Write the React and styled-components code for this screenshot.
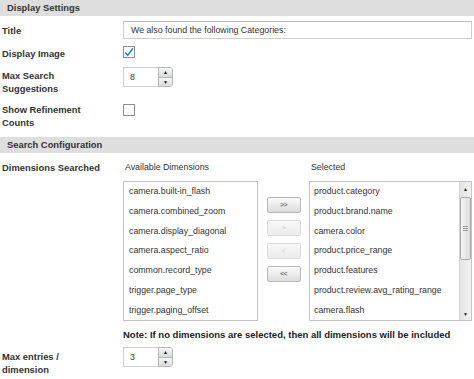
import styled, { createGlobalStyle } from 'styled-components';

const GlobalStyle = createGlobalStyle`
    html, body {
        margin: 0;
        padding: 0;
        background: #ffffff;
    }
    body {
        font-family: "Liberation Sans", Arial, sans-serif;
        color: #333333;
        width: 474px;
        height: 379px;
        overflow: hidden;
    }
`;

const Page = styled.div`
    width: 474px;
    display: flex;
    flex-direction: column;
`;

const SectionHeader = styled.div`
    height: 16px;
    line-height: 16px;
    padding-left: 7px;
    background: #dedede;
    font-size: 9.4px;
    font-weight: 700;
    color: #333;
    margin-top: ${(p) => p.$mt || 0}px;
`;

const Row = styled.div`
    display: grid;
    grid-template-columns: 121px 1fr;
    align-items: start;
    padding-left: 2px;
    height: ${(p) => (p.$h ? `${p.$h}px` : 'auto')};
`;

const Label = styled.div`
    font-size: 9.4px;
    font-weight: 700;
    line-height: 13px;
    color: #333;
    margin-top: ${(p) => p.$mt || 0}px;
`;

const Cell = styled.div`
    margin-top: ${(p) => p.$mt || 0}px;
    display: flex;
    flex-direction: column;
`;

const TextInput = styled.div`
    box-sizing: border-box;
    width: 349px;
    height: 18px;
    border: 1px solid #cfcfcf;
    border-top-color: #b9b9b9;
    padding-left: 7px;
    font-size: 8.8px;
    line-height: 16px;
    color: #333;
`;

const Checkbox = styled.div`
    box-sizing: border-box;
    width: 12px;
    height: 12px;
    border: 1px solid #8f8f8f;
    background: #fff;
    display: flex;
    align-items: center;
    justify-content: center;
`;

const Spinner = styled.div`
    display: flex;
    width: 50px;
    height: 20px;
`;

const SpinValue = styled.div`
    box-sizing: border-box;
    width: 35px;
    height: 100%;
    border: 1px solid #cfcfcf;
    border-right: none;
    padding-left: 6px;
    font-size: 8.8px;
    line-height: 18px;
    color: #333;
`;

const SpinButtons = styled.div`
    box-sizing: border-box;
    width: 15px;
    height: 100%;
    border: 1px solid #b5b5b5;
    border-radius: 0 3px 3px 0;
    display: flex;
    flex-direction: column;
    overflow: hidden;
`;

const SpinHalf = styled.div`
    flex: 1;
    background: linear-gradient(#f7f7f7, #dadada);
    display: flex;
    align-items: center;
    justify-content: center;
    font-size: 5px;
    color: #111;
    border-top: ${(p) => (p.$bottom ? '1px solid #b5b5b5' : 'none')};
`;

const Caption = styled.div`
    font-size: 8.8px;
    line-height: 13px;
    color: #333;
    padding-left: 2px;
    height: 20px;
`;

const Lists = styled.div`
    display: flex;
`;

const ListColumn = styled.div`
    display: flex;
    flex-direction: column;
`;

const ListBox = styled.div`
    box-sizing: border-box;
    width: ${(p) => p.$w}px;
    height: 140px;
    border: 1px solid #c4c4c4;
    display: flex;
    overflow: hidden;
    background: #fff;
`;

const Items = styled.div`
    flex: 1;
    overflow: hidden;
    padding-left: ${(p) => p.$pl}px;
`;

const Item = styled.div`
    height: 19.8px;
    line-height: 19.8px;
    font-size: 8.8px;
    color: #333;
    white-space: nowrap;
`;

const MoveButtons = styled.div`
    width: 51px;
    display: flex;
    flex-direction: column;
    align-items: center;
    gap: 7px;
    padding-top: 36px;
`;

const MoveButton = styled.div`
    box-sizing: border-box;
    width: 34px;
    height: 16px;
    border: 1px solid ${(p) => (p.$disabled ? '#dcdcdc' : '#b8b8b8')};
    border-radius: 2px;
    background: ${(p) =>
        p.$disabled
            ? 'linear-gradient(#f8f8f8, #ececec)'
            : 'linear-gradient(#fafafa, #dcdcdc)'};
    color: ${(p) => (p.$disabled ? '#c8c8c8' : '#444')};
    font-size: 7px;
    line-height: 14px;
    text-align: center;
    letter-spacing: -0.5px;
`;

const ScrollBar = styled.div`
    width: 11px;
    display: flex;
    flex-direction: column;
    background: linear-gradient(90deg, #e4e4e4, #f2f2f2);
    border-left: 1px solid #d4d4d4;
`;

const ScrollArrow = styled.div`
    height: 13px;
    font-size: 5px;
    color: #222;
    display: flex;
    align-items: center;
    justify-content: center;
`;

const ScrollTrack = styled.div`
    flex: 1;
    display: flex;
    flex-direction: column;
`;

const Thumb = styled.div`
    box-sizing: border-box;
    height: 63px;
    margin: 2px 0 0 0;
    border: 1px solid #a9a9a9;
    border-radius: 2px;
    background: linear-gradient(90deg, #f4f4f4, #dcdcdc);
    display: flex;
    align-items: center;
    justify-content: center;
`;

const Grip = styled.div`
    width: 5px;
    height: 6px;
    background: repeating-linear-gradient(#999 0 1px, transparent 1px 2px);
`;

const Note = styled.div`
    font-size: 9.5px;
    font-weight: 700;
    color: #222;
    line-height: 13px;
    margin-top: 7px;
    white-space: nowrap;
`;

function SpinBox({ value }) {
    return (
        <Spinner>
            <SpinValue>{value}</SpinValue>
            <SpinButtons>
                <SpinHalf>▲</SpinHalf>
                <SpinHalf $bottom>▼</SpinHalf>
            </SpinButtons>
        </Spinner>
    );
}

const available = [
    'camera.built-in_flash',
    'camera.combined_zoom',
    'camera.display_diagonal',
    'camera.aspect_ratio',
    'common.record_type',
    'trigger.page_type',
    'trigger.paging_offset',
];

const selected = [
    'product.category',
    'product.brand.name',
    'camera.color',
    'product.price_range',
    'product.features',
    'product.review.avg_rating_range',
    'camera.flash',
];

export default function App() {
    return (
        <Page>
            <GlobalStyle />
            <SectionHeader>Display Settings</SectionHeader>

            <Row $h={28}>
                <Label $mt={8}>Title</Label>
                <Cell $mt={5}>
                    <TextInput>We also found the following Categories:</TextInput>
                </Cell>
            </Row>

            <Row $h={18}>
                <Label $mt={3}>Display Image</Label>
                <Cell $mt={2}>
                    <Checkbox>
                        <svg width="11" height="11" viewBox="0 0 11 11">
                            <path
                                d="M1.5 5.5 L4.2 8.6 L9.8 0.8"
                                fill="none"
                                stroke="#1e88d8"
                                strokeWidth="1.7"
                            />
                        </svg>
                    </Checkbox>
                </Cell>
            </Row>

            <Row $h={35}>
                <Label $mt={7}>
                    Max Search
                    <br />
                    Suggestions
                </Label>
                <Cell $mt={5}>
                    <SpinBox value="8" />
                </Cell>
            </Row>

            <Row $h={37}>
                <Label $mt={6}>
                    Show Refinement
                    <br />
                    Counts
                </Label>
                <Cell $mt={7}>
                    <Checkbox />
                </Cell>
            </Row>

            <SectionHeader $mt={3}>Search Configuration</SectionHeader>

            <Row>
                <Label $mt={8}>Dimensions Searched</Label>
                <Cell $mt={8}>
                    <Lists>
                        <ListColumn>
                            <Caption>Available Dimensions</Caption>
                            <ListBox $w={135}>
                                <Items $pl={5}>
                                    {available.map((d) => (
                                        <Item key={d}>{d}</Item>
                                    ))}
                                </Items>
                            </ListBox>
                        </ListColumn>
                        <MoveButtons>
                            <MoveButton>&gt;&gt;</MoveButton>
                            <MoveButton $disabled>&gt;</MoveButton>
                            <MoveButton $disabled>&lt;</MoveButton>
                            <MoveButton>&lt;&lt;</MoveButton>
                        </MoveButtons>
                        <ListColumn>
                            <Caption>Selected</Caption>
                            <ListBox $w={163}>
                                <Items $pl={4}>
                                    {selected.map((d) => (
                                        <Item key={d}>{d}</Item>
                                    ))}
                                </Items>
                                <ScrollBar>
                                    <ScrollArrow>▲</ScrollArrow>
                                    <ScrollTrack>
                                        <Thumb>
                                            <Grip />
                                        </Thumb>
                                    </ScrollTrack>
                                    <ScrollArrow>▼</ScrollArrow>
                                </ScrollBar>
                            </ListBox>
                        </ListColumn>
                    </Lists>
                    <Note>
                        Note: If no dimensions are selected, then all dimensions will be
                        included
                    </Note>
                </Cell>
            </Row>

            <Row>
                <Label $mt={9}>
                    Max entries /
                    <br />
                    dimension
                </Label>
                <Cell $mt={6}>
                    <SpinBox value="3" />
                </Cell>
            </Row>
        </Page>
    );
}
